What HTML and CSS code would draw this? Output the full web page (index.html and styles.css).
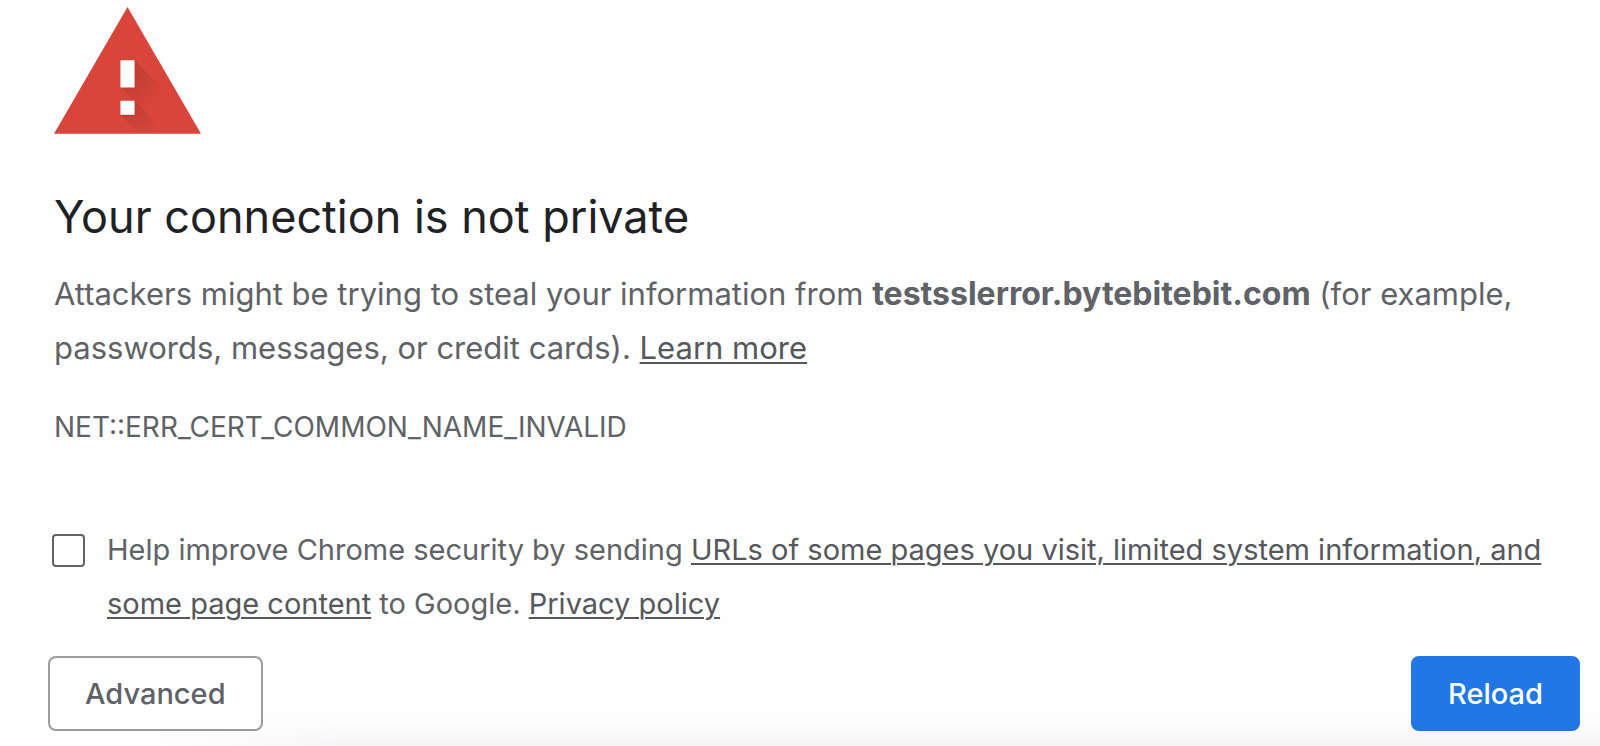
FILE: index.html
```html
<!DOCTYPE html>
<html lang="en">
<head>
<meta charset="utf-8">
<meta name="viewport" content="width=device-width, initial-scale=1">
<title>Privacy error</title>
<link rel="stylesheet" href="styles.css">
</head>
<body>
<main class="interstitial">
  <svg class="warning-icon" viewBox="0 0 146 126" aria-hidden="true">
    <defs>
      <linearGradient id="shade" x1="0" y1="0" x2="1" y2="1">
        <stop offset="0" stop-color="#000" stop-opacity=".16"/>
        <stop offset=".55" stop-color="#000" stop-opacity="0"/>
      </linearGradient>
      <linearGradient id="shade-dot" x1="0" y1="0" x2="1" y2="1">
        <stop offset="0" stop-color="#000" stop-opacity=".16"/>
        <stop offset=".8" stop-color="#000" stop-opacity="0"/>
      </linearGradient>
    </defs>
    <path fill="#d9453b" d="M73 0 146 126H0Z"/>
    <path fill="url(#shade)" d="M80 53 116 89 137 126H113L66 79Z"/>
    <path fill="url(#shade-dot)" d="M80 93 113 126H85L66 107Z"/>
    <path fill="#fff" d="M66 53h14v27H66zM66 93h14v14H66z"/>
  </svg>
  <h1 class="title">Your connection is not private</h1>
  <p class="message">Attackers might be trying to steal your information from <strong class="host">testsslerror.bytebitebit.com</strong> (for example, passwords, messages, or credit cards). <a class="link" href="#">Learn more</a></p>
  <p class="error-code">NET::ERR_CERT_COMMON_NAME_INVALID</p>
  <div class="opt-in">
    <input class="opt-in-box" type="checkbox" id="opt-in">
    <label class="opt-in-label" for="opt-in">Help improve Chrome security by sending <a class="link" href="#">URLs of some pages you visit, limited system information, and some page content</a> to Google. <a class="link" href="#">Privacy policy</a></label>
  </div>
  <div class="actions">
    <button class="button button-secondary" type="button">Advanced</button>
    <button class="button button-primary" type="button">Reload</button>
  </div>
</main>
</body>
</html>
```
FILE: styles.css
```css
* {
  box-sizing: border-box;
}

body {
  margin: 0;
  min-height: 100vh;
  background:
    linear-gradient(to right, #fefefe 10%, transparent 22%),
    linear-gradient(to top, #f5f5f7, #fefefe 28px);
  color: #5f6368;
  font-family: Inter, "Liberation Sans", sans-serif;
}

.interstitial {
  padding: 7px 20px 14px 48px;
}

.warning-icon {
  display: block;
  width: 147px;
  margin-left: 6px;
}

.title {
  margin: 53px 0 0 6px;
  color: #202124;
  font-size: 45px;
  font-weight: 400;
  line-height: 60px;
}

.message {
  margin: 20px 0 0 6px;
  font-size: 31px;
  line-height: 54px;
}

.host {
  font-size: 32px;
}

.error-code {
  margin: 28px 0 0 6px;
  font-size: 28px;
  line-height: 48px;
}

.link {
  color: #55585c;
  text-decoration-thickness: 2px;
  text-underline-offset: 3px;
}

.opt-in {
  display: flex;
  gap: 22px;
  margin: 72px 0 0 4px;
}

.opt-in-box {
  appearance: none;
  flex: none;
  width: 33px;
  height: 33px;
  margin: 11px 0 0;
  border: 2px solid #5f6368;
  border-radius: 4px;
  background: #fff;
}

.opt-in-box:checked {
  background: #1a73e8;
}

.opt-in-label {
  font-size: 29px;
  line-height: 54px;
}

.actions {
  display: flex;
  justify-content: space-between;
  margin-top: 25px;
}

.button {
  padding: 16px 35px;
  border: 2px solid #9a9c9f;
  border-radius: 8px;
  background: #fff;
  color: #5f6368;
  font-family: inherit;
  font-size: 29px;
  font-weight: 500;
  line-height: 39px;
}

.button-primary {
  border-color: #2277e6;
  background: #2277e6;
  color: #fff;
}
```
